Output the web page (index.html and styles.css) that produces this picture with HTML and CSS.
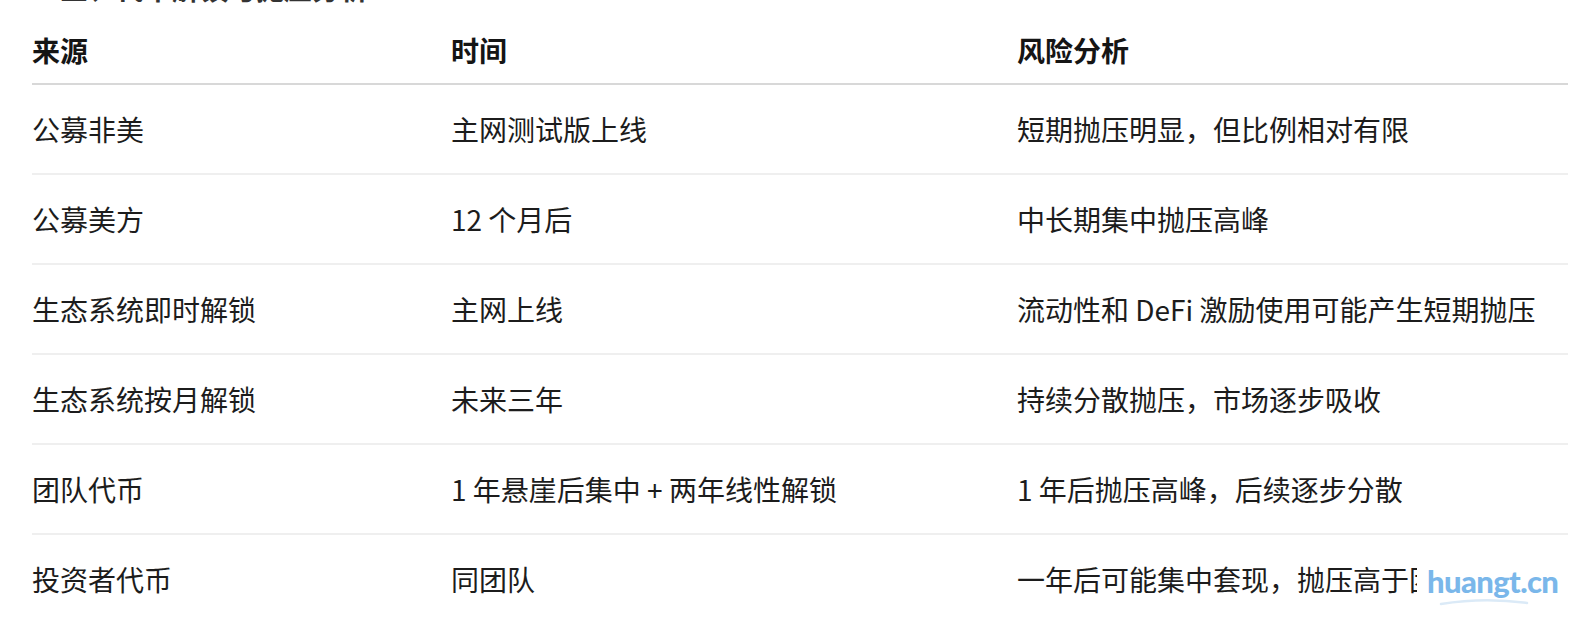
FILE: index.html
```html
<!DOCTYPE html>
<html lang="zh-CN">
<head>
<meta charset="utf-8">
<title>代币解锁与抛压分析</title>
<link rel="stylesheet" href="styles.css">
</head>
<body>
<div class="page">
  <h2 class="section-title">三、代币解锁与抛压分析</h2>
  <table class="unlock-table">
    <colgroup>
      <col class="c1">
      <col class="c2">
      <col class="c3">
    </colgroup>
    <thead>
      <tr><th>来源</th><th>时间</th><th>风险分析</th></tr>
    </thead>
    <tbody>
      <tr><td>公募非美</td><td>主网测试版上线</td><td>短期抛压明显，但比例相对有限</td></tr>
      <tr><td>公募美方</td><td>12 个月后</td><td>中长期集中抛压高峰</td></tr>
      <tr><td>生态系统即时解锁</td><td>主网上线</td><td>流动性和 DeFi 激励使用可能产生短期抛压</td></tr>
      <tr><td>生态系统按月解锁</td><td>未来三年</td><td>持续分散抛压，市场逐步吸收</td></tr>
      <tr><td>团队代币</td><td>1 年悬崖后集中 + 两年线性解锁</td><td>1 年后抛压高峰，后续逐步分散</td></tr>
      <tr><td>投资者代币</td><td>同团队</td><td>一年后可能集中套现，抛压高于团队</td></tr>
    </tbody>
  </table>
</div>
<div class="watermark">
  <span class="wm-text">huangt.cn</span>
  <svg class="wm-swoosh" width="90" height="8" viewBox="0 0 90 8"><path d="M2 6 Q45 -1 88 5" fill="none" stroke="#dbeaf7" stroke-width="2.5" stroke-linecap="round"/></svg>
</div>
</body>
</html>
```
FILE: styles.css
```css
html, body {
  margin: 0;
  padding: 0;
  background: #ffffff;
}
body {
  font-family: "Noto Sans CJK SC", "Noto Sans", sans-serif;
  color: #1c1c1c;
  overflow: hidden;
  height: 640px;
  position: relative;
}
.page {
  padding: 0 20px 0 32px;
}
.section-title {
  font-size: 28px;
  line-height: 28px;
  font-weight: 700;
  margin: -26px 0 15px 0;
  padding-left: 28px;
  color: #333;
}
.unlock-table {
  width: 1536px;
  border-collapse: collapse;
  table-layout: fixed;
}
.c1 { width: 419px; }
.c2 { width: 566px; }
.c3 { width: 551px; }
.unlock-table th {
  text-align: left;
  font-weight: 700;
  font-size: 28px;
  height: 66px;
  padding: 0;
  vertical-align: middle;
  color: #151515;
  border-bottom: 2px solid #d8d8d8;
}
.unlock-table td {
  font-size: 28px;
  height: 88px;
  padding: 0;
  vertical-align: middle;
  white-space: nowrap;
  overflow: hidden;
  border-bottom: 2px solid #efefef;
}
.unlock-table tbody tr:last-child td {
  border-bottom: none;
}
.watermark {
  position: absolute;
  left: 1417px;
  top: 560px;
  width: 150px;
  height: 58px;
  background: #ffffff;
  display: flex;
  flex-direction: column;
  align-items: flex-start;
}
.wm-text {
  font-family: "Lato", "Open Sans", sans-serif;
  font-weight: 900;
  font-size: 31px;
  line-height: 42px;
  letter-spacing: -0.6px;
  color: #7ab7ea;
  padding-left: 10px;
}
.wm-swoosh {
  margin: -4px 0 0 22px;
}
```
